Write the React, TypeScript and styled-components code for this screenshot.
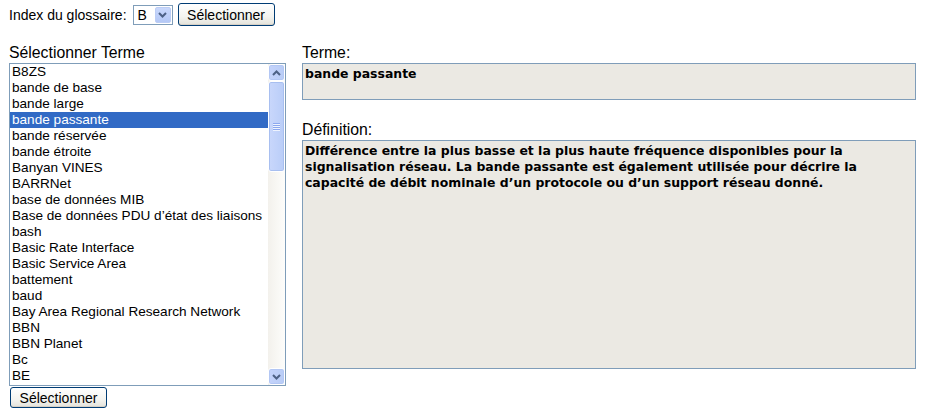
import React from 'react';
import styled, { createGlobalStyle } from 'styled-components';

const Global = createGlobalStyle`
  html, body { margin: 0; padding: 0; background: #fff; }
  body { font-family: "Liberation Sans", Arial, sans-serif; color: #000; }
`;

const Page = styled.div`
  width: 932px;
  height: 419px;
  box-sizing: border-box;
  padding: 3px 0 0 9px;
  overflow: hidden;
`;

const TopRow = styled.div`
  display: flex;
  align-items: center;
  height: 23px;
  font-size: 14px;
`;

const TopLabel = styled.span`
  margin-right: 6px;
`;

const Combo = styled.div`
  box-sizing: border-box;
  width: 40px;
  height: 20px;
  border: 1px solid #7f9db9;
  background: #fff;
  display: flex;
  align-items: stretch;
  margin-right: 5px;
  margin-top: 1px;
`;

const ComboText = styled.span`
  flex: 1;
  font-size: 14px;
  line-height: 18px;
  padding-left: 4px;
`;

const ComboButton = styled.span`
  width: 16px;
  margin: 1px;
  border-radius: 2px;
  background: linear-gradient(#c9d8fc, #b4c8f6);
  border: 1px solid #bccdf5;
  box-sizing: border-box;
  display: flex;
  align-items: center;
  justify-content: center;
`;

const XPButton = styled.button<{ $h: number }>`
  box-sizing: border-box;
  height: ${(p) => p.$h}px;
  width: 97px;
  padding: 0;
  font-family: "Liberation Sans", Arial, sans-serif;
  font-size: 14px;
  color: #000;
  border: 1px solid #003c74;
  border-radius: 3px;
  background: linear-gradient(#ffffff 0%, #f4f4f0 60%, #e3e2da 100%);
  box-shadow: inset 0 -1px 0 #d6d0c5;
`;

const Main = styled.div`
  display: flex;
  gap: 16px;
  margin-top: 17px;
`;

const LeftCol = styled.div`
  width: 277px;
  display: flex;
  flex-direction: column;
`;

const FieldLabel = styled.div<{ $top?: number }>`
  font-size: 15.8px;
  line-height: 20px;
  height: 20px;
  margin-top: ${(p) => p.$top ?? 0}px;
  color: #000;
`;

const ListBox = styled.div`
  box-sizing: border-box;
  height: 323px;
  border: 1px solid #7f9db9;
  display: flex;
  background: #fff;
`;

const Rows = styled.div`
  flex: 1;
  display: flex;
  flex-direction: column;
`;

const Row = styled.div<{ $sel?: boolean }>`
  height: 16px;
  line-height: 16px;
  font-size: 13.6px;
  padding-left: 2px;
  white-space: nowrap;
  background: ${(p) => (p.$sel ? '#316ac5' : 'transparent')};
  color: ${(p) => (p.$sel ? '#fff' : '#000')};
`;

const ScrollBar = styled.div`
  width: 17px;
  display: flex;
  flex-direction: column;
  background: linear-gradient(90deg, #f3f1ec, #fdfdfb);
`;

const ScrollBtn = styled.div`
  box-sizing: border-box;
  height: 17px;
  border: 1px solid #fff;
  border-radius: 3px;
  background: linear-gradient(90deg, #c4d3fb, #b8ccf6);
  box-shadow: inset 0 0 0 1px #b3c7f4;
  display: flex;
  align-items: center;
  justify-content: center;
`;

const Track = styled.div`
  flex: 1;
`;

const Thumb = styled.div`
  box-sizing: border-box;
  height: 91px;
  border: 1px solid #fff;
  border-radius: 3px;
  background: linear-gradient(90deg, #c9d7fb, #b9cdf8);
  box-shadow: inset 0 0 0 1px #a8bff0;
  display: flex;
  align-items: center;
  justify-content: center;
`;

const Grip = styled.div`
  display: flex;
  flex-direction: column;
  gap: 1px;
`;

const GripLine = styled.div`
  width: 7px;
  height: 1px;
  background: #8ca8ef;
  box-shadow: 0 1px 0 #eef3fe;
`;

const BottomBtnWrap = styled.div`
  margin-top: 1px;
  padding-left: 1px;
`;

const RightCol = styled.div`
  width: 614px;
  display: flex;
  flex-direction: column;
`;

const ReadBox = styled.div<{ $h: number }>`
  box-sizing: border-box;
  height: ${(p) => p.$h}px;
  border: 1px solid #7f9db9;
  background: #ebe9e3;
  padding: 2px 2px;
  font-family: "DejaVu Sans", Verdana, sans-serif;
  font-weight: bold;
  font-size: 12.45px;
  line-height: 16px;
  color: #000;
`;

const Line = styled.div`
  white-space: nowrap;
`;

const Chevron = ({ up }: { up?: boolean }) => (
  <svg width="9" height="6" viewBox="0 0 9 6">
    <path
      d={up ? 'M1 5 L4.5 1.5 L8 5' : 'M1 1 L4.5 4.5 L8 1'}
      fill="none"
      stroke="#4d6185"
      strokeWidth="2"
    />
  </svg>
);

const terms = [
  'B8ZS',
  'bande de base',
  'bande large',
  'bande passante',
  'bande réservée',
  'bande étroite',
  'Banyan VINES',
  'BARRNet',
  'base de données MIB',
  'Base de données PDU d’état des liaisons',
  'bash',
  'Basic Rate Interface',
  'Basic Service Area',
  'battement',
  'baud',
  'Bay Area Regional Research Network',
  'BBN',
  'BBN Planet',
  'Bc',
  'BE',
];

const definition = [
  'Différence entre la plus basse et la plus haute fréquence disponibles pour la',
  'signalisation réseau. La bande passante est également utilisée pour décrire la',
  'capacité de débit nominale d’un protocole ou d’un support réseau donné.',
];

export default function App() {
  return (
    <>
      <Global />
      <Page>
        <TopRow>
          <TopLabel>Index du glossaire:</TopLabel>
          <Combo>
            <ComboText>B</ComboText>
            <ComboButton>
              <Chevron />
            </ComboButton>
          </Combo>
          <XPButton $h={23}>Sélectionner</XPButton>
        </TopRow>
        <Main>
          <LeftCol>
            <FieldLabel>Sélectionner Terme</FieldLabel>
            <ListBox>
              <Rows>
                {terms.map((t) => (
                  <Row key={t} $sel={t === 'bande passante'}>
                    {t}
                  </Row>
                ))}
              </Rows>
              <ScrollBar>
                <ScrollBtn>
                  <Chevron up />
                </ScrollBtn>
                <Thumb>
                  <Grip>
                    <GripLine />
                    <GripLine />
                    <GripLine />
                    <GripLine />
                  </Grip>
                </Thumb>
                <Track />
                <ScrollBtn>
                  <Chevron />
                </ScrollBtn>
              </ScrollBar>
            </ListBox>
            <BottomBtnWrap>
              <XPButton $h={21}>Sélectionner</XPButton>
            </BottomBtnWrap>
          </LeftCol>
          <RightCol>
            <FieldLabel>Terme:</FieldLabel>
            <ReadBox $h={37}>bande passante</ReadBox>
            <FieldLabel $top={20}>Définition:</FieldLabel>
            <ReadBox $h={229}>
              {definition.map((l) => (
                <Line key={l}>{l}</Line>
              ))}
            </ReadBox>
          </RightCol>
        </Main>
      </Page>
    </>
  );
}
